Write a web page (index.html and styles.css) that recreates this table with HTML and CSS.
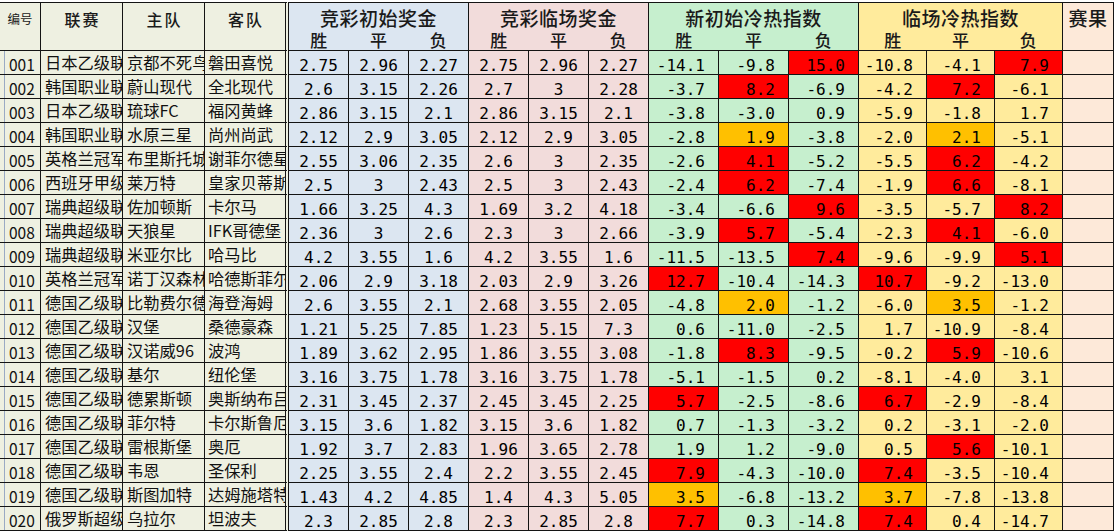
FILE: index.html
```html
<!DOCTYPE html>
<html lang="zh-CN">
<head>
<meta charset="utf-8">
<title>冷热指数</title>
<link rel="stylesheet" href="styles.css">
</head>
<body>
<div class="sheet">
  <div class="h idh">编号</div>
  <div class="h">联赛</div>
  <div class="h">主队</div>
  <div class="h aw">客队</div>
  <div class="grp cb"><div class="gt">竞彩初始奖金</div><div class="gs"><span>胜</span><span>平</span><span>负</span></div></div>
  <div class="grp cp"><div class="gt">竞彩临场奖金</div><div class="gs"><span>胜</span><span>平</span><span>负</span></div></div>
  <div class="grp cg"><div class="gt">新初始冷热指数</div><div class="gs"><span>胜</span><span>平</span><span>负</span></div></div>
  <div class="grp cy"><div class="gt">临场冷热指数</div><div class="gs"><span>胜</span><span>平</span><span>负</span></div></div>
  <div class="grp cs res"><div class="gt">赛果</div></div>

  <div class="id">001</div><div class="tx">日本乙级联赛</div><div class="tx">京都不死鸟</div><div class="tx aw">磐田喜悦</div>
  <div class="n cb">2.75</div><div class="n cb">2.96</div><div class="n cb">2.27</div>
  <div class="n cp">2.75</div><div class="n cp">2.96</div><div class="n cp">2.27</div>
  <div class="k cg">-14.1</div><div class="k cg">-9.8</div><div class="k red">15.0</div>
  <div class="k cy">-10.8</div><div class="k cy">-4.1</div><div class="k red">7.9</div><div class="cs"></div>

  <div class="id">002</div><div class="tx">韩国职业联赛</div><div class="tx">蔚山现代</div><div class="tx aw">全北现代</div>
  <div class="n cb">2.6</div><div class="n cb">3.15</div><div class="n cb">2.26</div>
  <div class="n cp">2.7</div><div class="n cp">3</div><div class="n cp">2.28</div>
  <div class="k cg">-3.7</div><div class="k red">8.2</div><div class="k cg">-6.9</div>
  <div class="k cy">-4.2</div><div class="k red">7.2</div><div class="k cy">-6.1</div><div class="cs"></div>

  <div class="id">003</div><div class="tx">日本乙级联赛</div><div class="tx">琉球FC</div><div class="tx aw">福冈黄蜂</div>
  <div class="n cb">2.86</div><div class="n cb">3.15</div><div class="n cb">2.1</div>
  <div class="n cp">2.86</div><div class="n cp">3.15</div><div class="n cp">2.1</div>
  <div class="k cg">-3.8</div><div class="k cg">-3.0</div><div class="k cg">0.9</div>
  <div class="k cy">-5.9</div><div class="k cy">-1.8</div><div class="k cy">1.7</div><div class="cs"></div>

  <div class="id">004</div><div class="tx">韩国职业联赛</div><div class="tx">水原三星</div><div class="tx aw">尚州尚武</div>
  <div class="n cb">2.12</div><div class="n cb">2.9</div><div class="n cb">3.05</div>
  <div class="n cp">2.12</div><div class="n cp">2.9</div><div class="n cp">3.05</div>
  <div class="k cg">-2.8</div><div class="k org">1.9</div><div class="k cg">-3.8</div>
  <div class="k cy">-2.0</div><div class="k org">2.1</div><div class="k cy">-5.1</div><div class="cs"></div>

  <div class="id">005</div><div class="tx">英格兰冠军联赛</div><div class="tx">布里斯托城</div><div class="tx aw">谢菲尔德星期三</div>
  <div class="n cb">2.55</div><div class="n cb">3.06</div><div class="n cb">2.35</div>
  <div class="n cp">2.6</div><div class="n cp">3</div><div class="n cp">2.35</div>
  <div class="k cg">-2.6</div><div class="k red">4.1</div><div class="k cg">-5.2</div>
  <div class="k cy">-5.5</div><div class="k red">6.2</div><div class="k cy">-4.2</div><div class="cs"></div>

  <div class="id">006</div><div class="tx">西班牙甲级联赛</div><div class="tx">莱万特</div><div class="tx aw">皇家贝蒂斯</div>
  <div class="n cb">2.5</div><div class="n cb">3</div><div class="n cb">2.43</div>
  <div class="n cp">2.5</div><div class="n cp">3</div><div class="n cp">2.43</div>
  <div class="k cg">-2.4</div><div class="k red">6.2</div><div class="k cg">-7.4</div>
  <div class="k cy">-1.9</div><div class="k red">6.6</div><div class="k cy">-8.1</div><div class="cs"></div>

  <div class="id">007</div><div class="tx">瑞典超级联赛</div><div class="tx">佐加顿斯</div><div class="tx aw">卡尔马</div>
  <div class="n cb">1.66</div><div class="n cb">3.25</div><div class="n cb">4.3</div>
  <div class="n cp">1.69</div><div class="n cp">3.2</div><div class="n cp">4.18</div>
  <div class="k cg">-3.4</div><div class="k cg">-6.6</div><div class="k red">9.6</div>
  <div class="k cy">-3.5</div><div class="k cy">-5.7</div><div class="k red">8.2</div><div class="cs"></div>

  <div class="id">008</div><div class="tx">瑞典超级联赛</div><div class="tx">天狼星</div><div class="tx aw">IFK哥德堡</div>
  <div class="n cb">2.36</div><div class="n cb">3</div><div class="n cb">2.6</div>
  <div class="n cp">2.3</div><div class="n cp">3</div><div class="n cp">2.66</div>
  <div class="k cg">-3.9</div><div class="k red">5.7</div><div class="k cg">-5.4</div>
  <div class="k cy">-2.3</div><div class="k red">4.1</div><div class="k cy">-6.0</div><div class="cs"></div>

  <div class="id">009</div><div class="tx">瑞典超级联赛</div><div class="tx">米亚尔比</div><div class="tx aw">哈马比</div>
  <div class="n cb">4.2</div><div class="n cb">3.55</div><div class="n cb">1.6</div>
  <div class="n cp">4.2</div><div class="n cp">3.55</div><div class="n cp">1.6</div>
  <div class="k cg">-11.5</div><div class="k cg">-13.5</div><div class="k red">7.4</div>
  <div class="k cy">-9.6</div><div class="k cy">-9.9</div><div class="k red">5.1</div><div class="cs"></div>

  <div class="id">010</div><div class="tx">英格兰冠军联赛</div><div class="tx">诺丁汉森林</div><div class="tx aw">哈德斯菲尔德</div>
  <div class="n cb">2.06</div><div class="n cb">2.9</div><div class="n cb">3.18</div>
  <div class="n cp">2.03</div><div class="n cp">2.9</div><div class="n cp">3.26</div>
  <div class="k red">12.7</div><div class="k cg">-10.4</div><div class="k cg">-14.3</div>
  <div class="k red">10.7</div><div class="k cy">-9.2</div><div class="k cy">-13.0</div><div class="cs"></div>

  <div class="id">011</div><div class="tx">德国乙级联赛</div><div class="tx">比勒费尔德</div><div class="tx aw">海登海姆</div>
  <div class="n cb">2.6</div><div class="n cb">3.55</div><div class="n cb">2.1</div>
  <div class="n cp">2.68</div><div class="n cp">3.55</div><div class="n cp">2.05</div>
  <div class="k cg">-4.8</div><div class="k org">2.0</div><div class="k cg">-1.2</div>
  <div class="k cy">-6.0</div><div class="k org">3.5</div><div class="k cy">-1.2</div><div class="cs"></div>

  <div class="id">012</div><div class="tx">德国乙级联赛</div><div class="tx">汉堡</div><div class="tx aw">桑德豪森</div>
  <div class="n cb">1.21</div><div class="n cb">5.25</div><div class="n cb">7.85</div>
  <div class="n cp">1.23</div><div class="n cp">5.15</div><div class="n cp">7.3</div>
  <div class="k cg">0.6</div><div class="k cg">-11.0</div><div class="k cg">-2.5</div>
  <div class="k cy">1.7</div><div class="k cy">-10.9</div><div class="k cy">-8.4</div><div class="cs"></div>

  <div class="id">013</div><div class="tx">德国乙级联赛</div><div class="tx">汉诺威96</div><div class="tx aw">波鸿</div>
  <div class="n cb">1.89</div><div class="n cb">3.62</div><div class="n cb">2.95</div>
  <div class="n cp">1.86</div><div class="n cp">3.55</div><div class="n cp">3.08</div>
  <div class="k cg">-1.8</div><div class="k red">8.3</div><div class="k cg">-9.5</div>
  <div class="k cy">-0.2</div><div class="k red">5.9</div><div class="k cy">-10.6</div><div class="cs"></div>

  <div class="id">014</div><div class="tx">德国乙级联赛</div><div class="tx">基尔</div><div class="tx aw">纽伦堡</div>
  <div class="n cb">3.16</div><div class="n cb">3.75</div><div class="n cb">1.78</div>
  <div class="n cp">3.16</div><div class="n cp">3.75</div><div class="n cp">1.78</div>
  <div class="k cg">-5.1</div><div class="k cg">-1.5</div><div class="k cg">0.2</div>
  <div class="k cy">-8.1</div><div class="k cy">-4.0</div><div class="k cy">3.1</div><div class="cs"></div>

  <div class="id">015</div><div class="tx">德国乙级联赛</div><div class="tx">德累斯顿</div><div class="tx aw">奥斯纳布吕克</div>
  <div class="n cb">2.31</div><div class="n cb">3.45</div><div class="n cb">2.37</div>
  <div class="n cp">2.45</div><div class="n cp">3.45</div><div class="n cp">2.25</div>
  <div class="k red">5.7</div><div class="k cg">-2.5</div><div class="k cg">-8.6</div>
  <div class="k red">6.7</div><div class="k cy">-2.9</div><div class="k cy">-8.4</div><div class="cs"></div>

  <div class="id">016</div><div class="tx">德国乙级联赛</div><div class="tx">菲尔特</div><div class="tx aw">卡尔斯鲁厄</div>
  <div class="n cb">3.15</div><div class="n cb">3.6</div><div class="n cb">1.82</div>
  <div class="n cp">3.15</div><div class="n cp">3.6</div><div class="n cp">1.82</div>
  <div class="k cg">0.7</div><div class="k cg">-1.3</div><div class="k cg">-3.2</div>
  <div class="k cy">0.2</div><div class="k cy">-3.1</div><div class="k cy">-2.0</div><div class="cs"></div>

  <div class="id">017</div><div class="tx">德国乙级联赛</div><div class="tx">雷根斯堡</div><div class="tx aw">奥厄</div>
  <div class="n cb">1.92</div><div class="n cb">3.7</div><div class="n cb">2.83</div>
  <div class="n cp">1.96</div><div class="n cp">3.65</div><div class="n cp">2.78</div>
  <div class="k cg">1.9</div><div class="k cg">1.2</div><div class="k cg">-9.0</div>
  <div class="k cy">0.5</div><div class="k red">5.6</div><div class="k cy">-10.1</div><div class="cs"></div>

  <div class="id">018</div><div class="tx">德国乙级联赛</div><div class="tx">韦恩</div><div class="tx aw">圣保利</div>
  <div class="n cb">2.25</div><div class="n cb">3.55</div><div class="n cb">2.4</div>
  <div class="n cp">2.2</div><div class="n cp">3.55</div><div class="n cp">2.45</div>
  <div class="k red">7.9</div><div class="k cg">-4.3</div><div class="k cg">-10.0</div>
  <div class="k red">7.4</div><div class="k cy">-3.5</div><div class="k cy">-10.4</div><div class="cs"></div>

  <div class="id">019</div><div class="tx">德国乙级联赛</div><div class="tx">斯图加特</div><div class="tx aw">达姆施塔特</div>
  <div class="n cb">1.43</div><div class="n cb">4.2</div><div class="n cb">4.85</div>
  <div class="n cp">1.4</div><div class="n cp">4.3</div><div class="n cp">5.05</div>
  <div class="k org">3.5</div><div class="k cg">-6.8</div><div class="k cg">-13.2</div>
  <div class="k org">3.7</div><div class="k cy">-7.8</div><div class="k cy">-13.8</div><div class="cs"></div>

  <div class="id">020</div><div class="tx">俄罗斯超级联赛</div><div class="tx">乌拉尔</div><div class="tx aw">坦波夫</div>
  <div class="n cb">2.3</div><div class="n cb">2.85</div><div class="n cb">2.8</div>
  <div class="n cp">2.3</div><div class="n cp">2.85</div><div class="n cp">2.8</div>
  <div class="k red">7.7</div><div class="k cg">0.3</div><div class="k cg">-14.8</div>
  <div class="k red">7.4</div><div class="k cy">0.4</div><div class="k cy">-14.7</div><div class="cs"></div>
</div>
</body>
</html>
```

FILE: styles.css
```css
* { box-sizing: border-box; }

body {
  margin: 0;
  background: #ffffff;
  color: #000;
  font-family: "Noto Sans CJK SC", "Noto Sans", sans-serif;
}

.sheet {
  display: grid;
  grid-template-columns: 41px 82px 82px 84px repeat(6, 60px) repeat(3, 70px) repeat(3, 68px) 51px;
  grid-template-rows: 49px;
  grid-auto-rows: 24px;
  width: 1114px;
  margin-top: 2px;
}

.sheet > div {
  border-right: 1px solid #141414;
  border-bottom: 1px solid #141414;
  overflow: hidden;
  white-space: nowrap;
}

/* header */
.h {
  border-top: 1px solid #141414;
  background: #eef0e1;
  text-align: center;
  font-size: 16px;
  font-weight: 500;
  line-height: 18px;
  letter-spacing: 2px;
  padding: 7px 0 0 2px;
  color: #1a1a1a;
}

.h.idh {
  font-size: 12.5px;
  font-weight: 400;
  letter-spacing: 0;
  padding: 8px 0 0 0;
  line-height: 16px;
}

.grp {
  grid-column: span 3;
  border-top: 1px solid #141414;
  text-align: center;
  color: #1a1a1a;
}

.grp.res {
  grid-column: span 1;
}

.gt {
  font-size: 19px;
  font-weight: 500;
  line-height: 22px;
  padding-top: 4px;
  letter-spacing: 0.5px;
}

.gs {
  display: grid;
  grid-template-columns: repeat(3, 1fr);
  font-size: 17px;
  font-weight: 500;
  line-height: 21px;
}

.sheet > .aw {
  border-right: 4px double #141414;
}

/* body cells */
.id {
  background: linear-gradient(to right, transparent 4px, #9aaac4 4px, #9aaac4 5px, transparent 5px), #eef0e1;
  font-size: 15.5px;
  line-height: 21px;
  padding: 3px 0 0 9px;
  color: #111;
}

.tx {
  background: #eef0e1;
  font-size: 16.3px;
  line-height: 23px;
  padding-left: 4px;
  color: #111;
}

.tx.aw {
  padding-left: 3px;
}

.n, .k {
  font-family: "DejaVu Sans Mono", "Liberation Mono", monospace;
  font-size: 16px;
  line-height: 23px;
  padding-top: 3px;
}

.n { text-align: center; }

.k {
  text-align: right;
  padding-right: 13px;
}

.cb { background: #dce6f1; }
.cp { background: #f2dcdb; }
.cg { background: #c6efce; }
.cy { background: #ffeb9c; }
.cs { background: #fde9d9; }
.red { background: #ff0000; }
.org { background: #ffc000; }
```
